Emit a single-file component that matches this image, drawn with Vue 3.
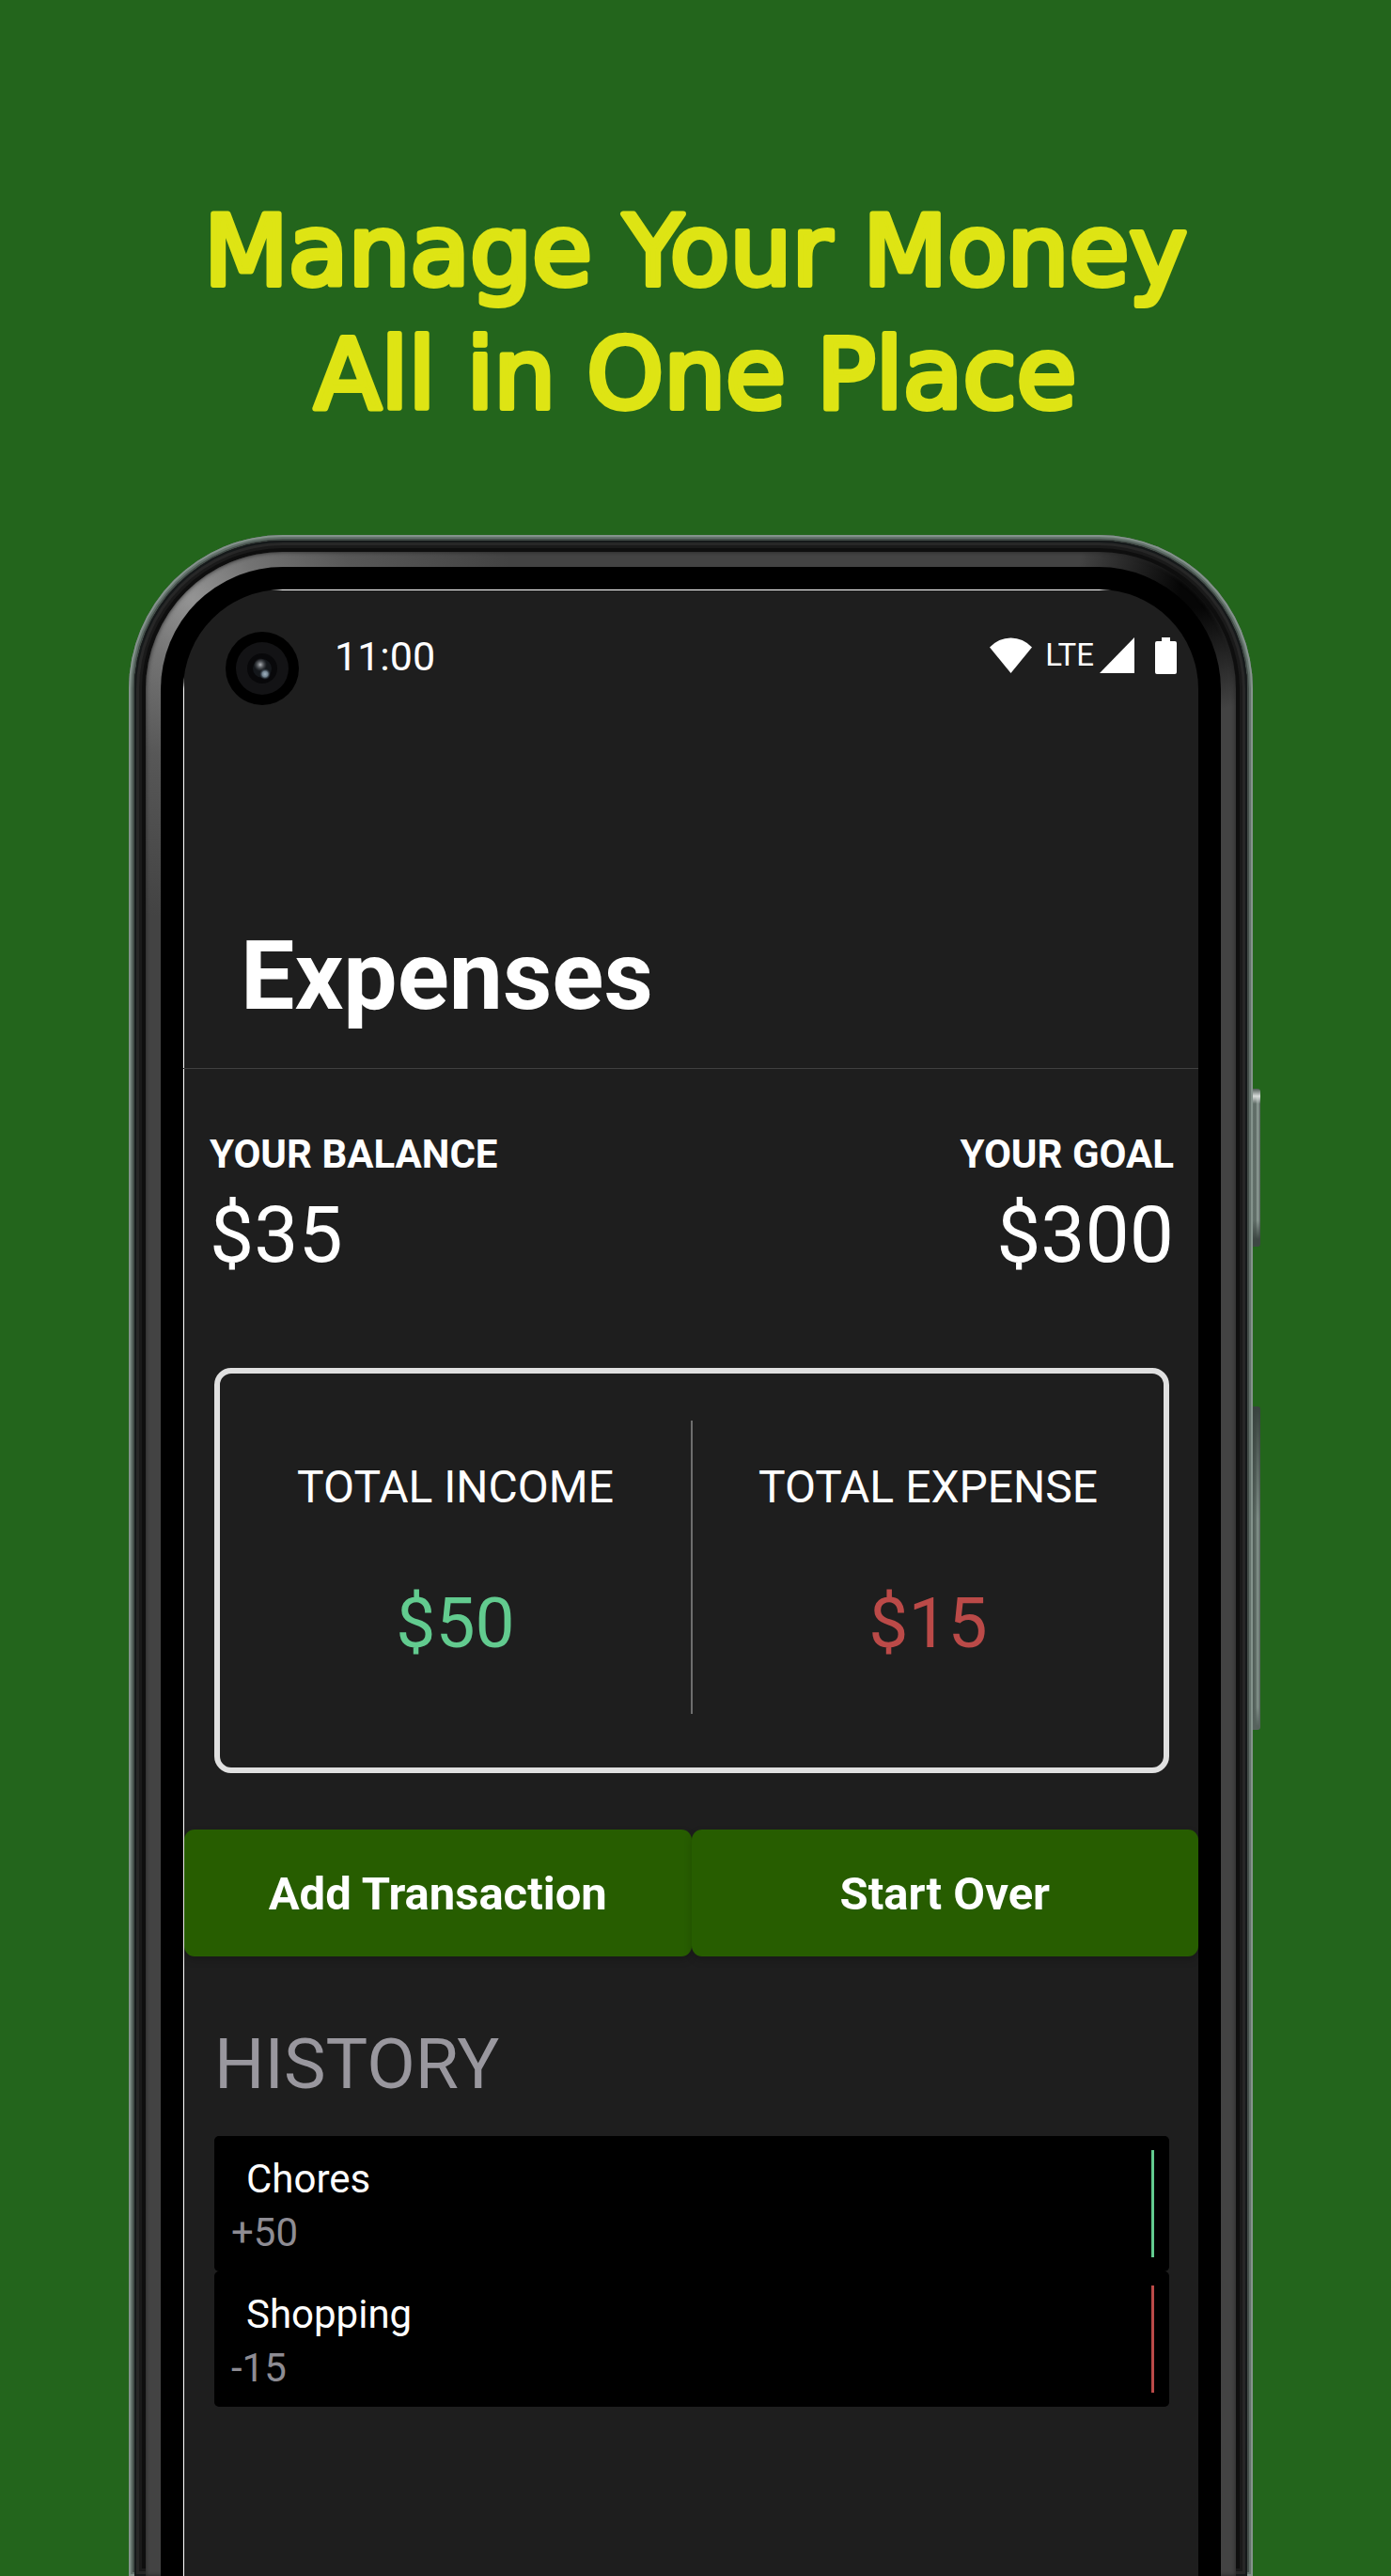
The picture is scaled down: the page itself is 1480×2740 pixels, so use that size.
<script setup>
const totals = [
  { label: 'TOTAL INCOME', value: '$50', kind: 'income' },
  { label: 'TOTAL EXPENSE', value: '$15', kind: 'expense' }
]
const history = [
  { name: 'Chores', amount: '+50', kind: 'income' },
  { name: 'Shopping', amount: '-15', kind: 'expense' }
]
</script>

<template>
  <div class="page">
    <h1 class="headline">
      <svg class="headline-art" viewBox="0 0 1480 300">
        <text x="740" y="123">Manage Your Money</text>
        <text x="740" y="254">All in One Place</text>
      </svg>
    </h1>

    <div class="phone">
      <span class="side-key power"></span>
      <span class="side-key volume"></span>
      <div class="rail">
        <div class="rim">
          <div class="bezel">
            <main class="screen">
              <svg class="camera" viewBox="0 0 78 78" aria-hidden="true">
                <defs>
                  <radialGradient id="glintA">
                    <stop offset="0" stop-color="#b4b8bc" />
                    <stop offset="1" stop-color="#5b6066" stop-opacity="0" />
                  </radialGradient>
                  <radialGradient id="glintB">
                    <stop offset="0" stop-color="#9fb2c0" />
                    <stop offset="0.5" stop-color="#71828f" />
                    <stop offset="1" stop-color="#2a3742" stop-opacity="0" />
                  </radialGradient>
                </defs>
                <circle cx="39" cy="39" r="39" fill="#000" />
                <circle cx="39" cy="39" r="28" fill="#131315" />
                <circle cx="39" cy="39" r="16" fill="#08080a" />
                <circle cx="39" cy="39" r="10" fill="#14171b" />
                <circle cx="37" cy="35" r="7" fill="url(#glintA)" />
                <circle cx="42" cy="45" r="6" fill="url(#glintB)" />
              </svg>

              <div class="status">
                <span class="clock">11:00</span>
                <div class="signals">
                  <svg width="45" height="38" viewBox="0 0 45 38" aria-hidden="true">
                    <path d="M0 10.500Q9.500 0.500 22.500 0.500T45 10.500L22.500 38Z" fill="#fff" />
                  </svg>
                  <span class="network">LTE</span>
                  <svg class="bars" width="37" height="38" viewBox="0 0 37 38" aria-hidden="true">
                    <path d="M37 0V38H0Z" fill="#fff" />
                  </svg>
                  <svg class="battery" width="23" height="39" viewBox="0 0 23 39" aria-hidden="true">
                    <path d="M7 0H16V4H21Q23 4 23 6V37Q23 39 21 39H2Q0 39 0 37V6Q0 4 2 4H7Z" fill="#fff" />
                  </svg>
                </div>
              </div>

              <header class="title-bar">
                <h2>Expenses</h2>
              </header>

              <section class="summary">
                <div>
                  <h3>YOUR BALANCE</h3>
                  <p>$35</p>
                </div>
                <div class="goal">
                  <h3>YOUR GOAL</h3>
                  <p>$300</p>
                </div>
              </section>

              <section class="totals">
                <div v-for="t in totals" :key="t.label" class="total">
                  <h3>{{ t.label }}</h3>
                  <p :class="t.kind">{{ t.value }}</p>
                </div>
              </section>

              <div class="actions">
                <button type="button">Add Transaction</button>
                <button type="button">Start Over</button>
              </div>

              <section class="history">
                <h3>HISTORY</h3>
                <ul>
                  <li v-for="h in history" :key="h.name">
                    <div class="entry">
                      <span class="name">{{ h.name }}</span>
                      <span class="amount">{{ h.amount }}</span>
                    </div>
                    <i class="marker" :class="h.kind"></i>
                  </li>
                </ul>
              </section>
            </main>
          </div>
        </div>
      </div>
    </div>
  </div>
</template>

<style>
body {
  margin: 0;
  background: #23651c;
}
</style>

<style scoped>
.page {
  display: flex;
  flex-direction: column;
  min-height: 100vh;
  box-sizing: border-box;
  padding-top: 180px;
  background: #23651c;
  color: #fff;
  font-family: Roboto, "Liberation Sans", sans-serif;
}
h1, h2, h3, p, ul {
  margin: 0;
  padding: 0;
}
.headline {
  margin-bottom: 89px;
  line-height: 0;
}
.headline-art {
  display: block;
  width: 100%;
}
.headline-art text {
  font: 400 104px "DejaVu Sans", sans-serif;
  text-anchor: middle;
  fill: #dee414;
  stroke: #dee414;
  stroke-width: 6px;
  stroke-linejoin: round;
}

/* device body: metal edge, dark rail, rim, bezel */
.phone {
  position: relative;
  flex: 1;
  display: flex;
  margin: 0 147px 0 137px;
  padding: 6px 6px 0;
  border-radius: 164px 164px 0 0;
  background: #434e49;
  box-shadow: inset 0 0 0 2px #84938c, inset 0 0 0 4px #64726c;
}
.rail {
  flex: 1;
  display: flex;
  padding: 12px 12px 0;
  border-radius: 158px 158px 0 0;
  background: #0e0e0e;
  box-shadow: inset 0 0 0 2px #15191a, inset 0 0 0 5px #272727, inset 0 0 0 8px #1a1a1a;
}
.rim {
  flex: 1;
  display: flex;
  padding: 16px 16px 0;
  border-radius: 146px 146px 0 0;
  background:
    radial-gradient(circle at 50px 50px, #949494, #94949499 70px, #94949440 170px, #94949400 340px),
    radial-gradient(circle at calc(100% - 40px) 40px, #060606 20px, #06060600 130px),
    #434343;
  box-shadow: inset 0 0 4px #222;
}
.bezel {
  flex: 1;
  display: flex;
  padding: 24px 24px 0;
  border-radius: 130px 130px 0 0;
  background: #000;
}
.screen {
  position: relative;
  flex: 1;
  min-width: 0;
  border-radius: 106px 106px 0 0;
  background:
    linear-gradient(90deg, transparent 90px, #fff 105px, #fff calc(100% - 105px), transparent calc(100% - 90px)) 0 0 / 100% 1px no-repeat,
    linear-gradient(180deg, transparent 90px, #fff 105px) 0 0 / 1px 100% no-repeat,
    #1e1e1e;
}
.side-key {
  position: absolute;
  left: 100%;
  width: 8px;
  border-radius: 0 3px 3px 0;
}
.power {
  top: 589px;
  height: 168px;
  background:
    linear-gradient(180deg, #4f5b56, #d8dcda 8px, #84938c00 16px, #3d474300 140px, #3d4743 160px),
    linear-gradient(90deg, #64726c, #5d6a64 3px, #8f9d97 5px, #84938c 6px, #4f5b56);
}
.volume {
  top: 927px;
  height: 344px;
  background:
    linear-gradient(180deg, #38423e, #38423e00 120px, #56625d00 320px, #56625d 340px),
    linear-gradient(90deg, #4f5b56, #5d6a64 3px, #84938c 5px, #7b8a83 6px, #4f5b56);
}

.camera {
  position: absolute;
  left: 45px;
  top: 45px;
  width: 78px;
  height: 78px;
}
.status {
  display: flex;
  align-items: center;
  justify-content: space-between;
  height: 140px;
  padding: 0 23px 0 161px;
}
.clock {
  padding-top: 2px;
  font-size: 43px;
  line-height: 50px;
}
.signals {
  display: flex;
  align-items: center;
}
.network {
  margin-left: 14px;
  font-size: 33px;
  line-height: 38px;
}
.bars {
  margin-left: 6px;
}
.battery {
  margin-left: 22px;
}

.title-bar {
  padding: 211px 61px 38px;
  border-bottom: 1px solid #404040;
}
.title-bar h2 {
  font-size: 102px;
  line-height: 120px;
  font-weight: 700;
}

.summary {
  display: flex;
  justify-content: space-between;
  padding: 66px 26px 0 28px;
}
.summary h3 {
  font-size: 42px;
  line-height: 50px;
  font-weight: 700;
}
.summary p {
  margin-top: 12px;
  font-size: 84px;
  line-height: 98px;
}
.goal {
  text-align: right;
}

.totals {
  display: flex;
  margin: 92px 31px 0 33px;
  padding: 50px 0 57px;
  border: 6px solid #e0e0e0;
  border-radius: 18px;
}
.total {
  flex: 1;
  padding: 43px 0 53px;
  text-align: center;
}
.total + .total {
  border-left: 2px solid #6e6e6e;
}
.total h3 {
  font-size: 48px;
  line-height: 56px;
  font-weight: 400;
}
.total p {
  margin-top: 72px;
  font-size: 75px;
  line-height: 88px;
}
p.income {
  color: #62cb8f;
}
p.expense {
  color: #bb4a48;
}

.actions {
  display: flex;
  margin-top: 60px;
  padding-left: 1px;
}
.actions button {
  flex: 1;
  height: 135px;
  padding: 2px 0 0;
  border: 0;
  border-radius: 11px;
  background: #275d00;
  box-shadow: 0 4px 8px #0000002e;
  color: #fff;
  font: 700 49px/56px Roboto, "Liberation Sans", sans-serif;
}

.history {
  padding: 70px 31px 60px 33px;
}
.history h3 {
  color: #99979e;
  font-size: 75px;
  line-height: 88px;
  font-weight: 400;
}
.history ul {
  margin-top: 33px;
  list-style: none;
}
.history li {
  display: flex;
  justify-content: space-between;
  height: 144px;
  box-sizing: border-box;
  padding: 15px 16px 15px 18px;
  border-radius: 5px;
  background: #000;
  font-size: 42px;
  line-height: 50px;
}
.entry {
  display: flex;
  flex-direction: column;
  gap: 7px;
  padding-top: 6px;
}
.name {
  padding-left: 16px;
}
.amount {
  color: #8e8c93;
}
.marker {
  width: 3px;
}
.marker.income {
  background: #62cb8f;
}
.marker.expense {
  background: #bb4a48;
}
</style>
